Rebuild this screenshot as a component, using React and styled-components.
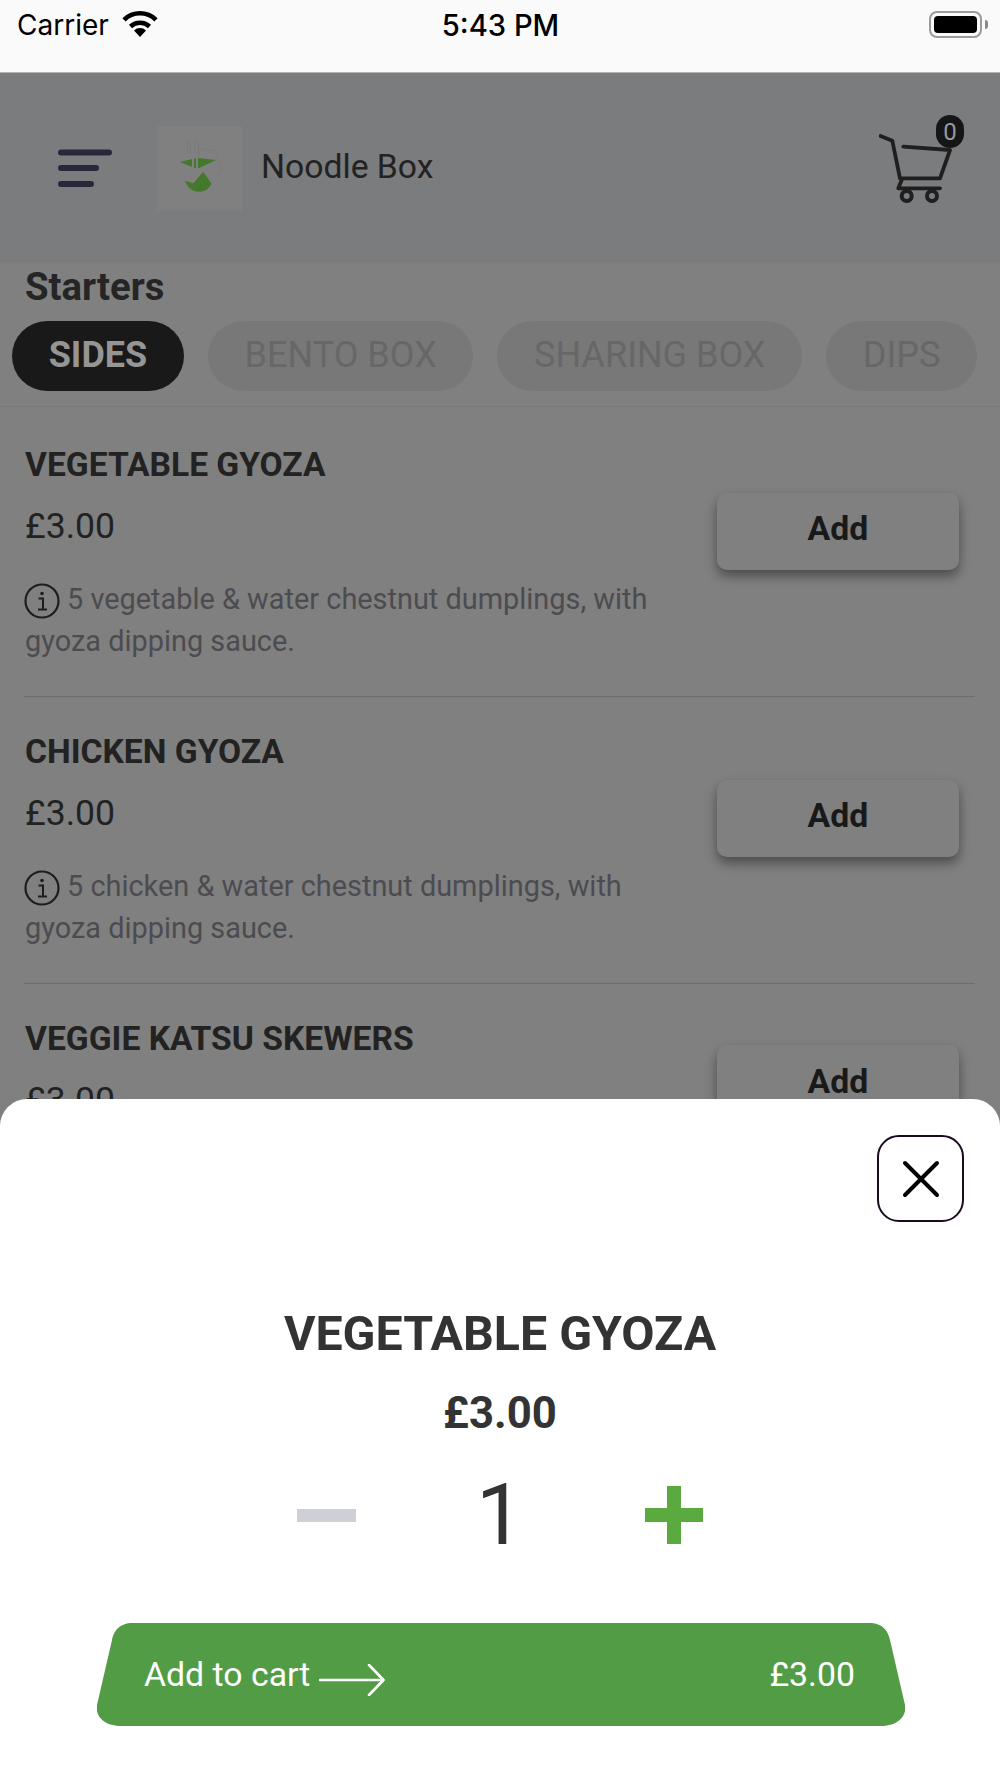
import React from "react";
import styled, { createGlobalStyle } from "styled-components";

const Global = createGlobalStyle`
  html, body { margin: 0; padding: 0; background: #808080; }
  * { box-sizing: border-box; }
`;

const Phone = styled.div`
  position: relative;
  width: 1000px;
  height: 1778px;
  overflow: hidden;
  background: #808080;
  font-family: Roboto, "Liberation Sans", sans-serif;
`;

const StatusBar = styled.div`
  display: grid;
  grid-template-columns: 1fr auto 1fr;
  align-items: start;
  height: 73px;
  padding: 8px 12px 0 17px;
  background: #fafafa;
  border-bottom: 1px solid #b4b4b4;
  color: #000;
  font-family: Inter, "Liberation Sans", sans-serif;
  font-size: 28px;
  line-height: 34px;
`;
const Carrier = styled.div`
  display: flex;
  align-items: center;
  gap: 12px;
`;
const Clock = styled.div`
  margin-right: 4px;
  padding-top: 1px;
  font-size: 29.2px;
  font-weight: 500;
`;
const Battery = styled.div`
  justify-self: end;
  margin-top: 3px;
  display: flex;
  align-items: center;
  gap: 3px;
`;
const BatteryShell = styled.div`
  width: 53px;
  height: 27px;
  padding: 3px;
  border: 2px solid #9b9b9b;
  border-radius: 8px;
`;
const BatteryFill = styled.div`
  width: 100%;
  height: 100%;
  background: #000;
  border-radius: 4px;
`;
const BatteryNub = styled.div`
  width: 3px;
  height: 9px;
  background: #8a8a8a;
  border-radius: 0 3px 3px 0;
`;

const Header = styled.header`
  display: flex;
  align-items: center;
  height: 190px;
  padding: 0 36px 0 58px;
  background: #7b7c7e;
`;
const MenuIcon = styled.svg`
  display: block;
  width: 54px;
  height: 40px;
  margin-right: 45px;
`;
const LogoTile = styled.div`
  width: 85px;
  height: 85px;
  margin-right: 19px;
  background: #808080;
`;
const Brand = styled.div`
  flex: 1;
  margin-bottom: 4px;
  font-size: 33.7px;
  color: #222;
`;
const CartWrap = styled.div`
  position: relative;
  width: 85px;
  height: 90px;
  margin-top: -16px;
`;
const CartBadge = styled.span`
  position: absolute;
  top: 0;
  right: 0;
  display: flex;
  align-items: center;
  justify-content: center;
  width: 28px;
  height: 33px;
  border-radius: 14px;
  background: #161616;
  color: #9a9a9a;
  font-size: 24px;
`;

const SectionTitle = styled.h2`
  margin: 0;
  height: 58px;
  padding-left: 25px;
  font-size: 38.3px;
  line-height: 48px;
  font-weight: 700;
  color: #252525;
`;
const Tabs = styled.nav`
  display: flex;
  gap: 24px;
  margin-bottom: 3px;
  padding: 0 12px 15px;
  border-bottom: 1px solid #797979;
`;
const Tab = styled.div`
  height: 70px;
  padding: 0 36.7px;
  border-radius: 35px;
  background: ${(p) => (p.$active ? "#191919" : "#787878")};
  color: ${(p) => (p.$active ? "#959595" : "#676767")};
  font-size: 36px;
  line-height: 68px;
  font-weight: ${(p) => (p.$active ? 700 : 400)};
  white-space: nowrap;
`;

const Item = styled.article`
  display: flex;
  align-items: center;
  margin: 0 25px 0 24px;
  min-height: ${(p) => (p.$short ? "243px" : "auto")};
  border-bottom: ${(p) => (p.$short ? "none" : "1px solid #6c6c6c")};
`;
const ItemBody = styled.div`
  align-self: flex-start;
  width: 640px;
  margin-right: 53px;
  padding: 34.5px 0 34.5px 1px;
`;
const ItemName = styled.div`
  font-size: 33.6px;
  line-height: 40px;
  font-weight: 700;
  color: #222;
`;
const ItemPrice = styled.div`
  margin-top: 19px;
  font-size: 35.6px;
  line-height: 44px;
  color: #222;
`;
const ItemDesc = styled.p`
  margin: 30px 0 0;
  font-size: 28.9px;
  line-height: 42px;
  color: #4c4c50;
`;
const InfoIcon = styled.svg`
  width: 36px;
  height: 36px;
  margin: 0 7px 0 -1px;
  vertical-align: -10px;
`;
const AddButton = styled.button`
  display: block;
  flex: none;
  width: 242px;
  height: 77px;
  margin: 0 0 43.5px;
  padding: 0 0 5px;
  border: none;
  border-radius: 10px;
  background: #808080;
  box-shadow: 0 6px 12px rgba(0, 0, 0, 0.42);
  font: 700 33.8px Roboto, sans-serif;
  color: #191919;
`;

const Sheet = styled.section`
  position: absolute;
  left: 0;
  right: 0;
  bottom: 0;
  height: 679px;
  display: flex;
  flex-direction: column;
  align-items: center;
  background: #fff;
  border-radius: 27px 27px 0 0;
`;
const CloseButton = styled.button`
  align-self: flex-end;
  display: flex;
  align-items: center;
  justify-content: center;
  width: 87px;
  height: 87px;
  margin: 36px 36px 0 0;
  padding: 0;
  background: #fff;
  border: 2px solid #1a0a20;
  border-radius: 22px;
`;
const SheetTitle = styled.h1`
  margin: 82px 0 0;
  font-size: 48.3px;
  line-height: 60px;
  font-weight: 700;
  color: #333;
`;
const SheetPrice = styled.div`
  margin-top: 24px;
  font-size: 43.7px;
  line-height: 50px;
  font-weight: 700;
  color: #333;
`;
const Stepper = styled.div`
  display: grid;
  grid-template-columns: repeat(3, 174px);
  align-items: center;
  justify-items: center;
  height: 100px;
  margin-top: 27px;
`;
const Minus = styled.div`
  width: 59px;
  height: 13px;
  background: #cfd0d6;
`;
const Plus = styled.svg`
  display: block;
  width: 58px;
  height: 58px;
`;
const Qty = styled.div`
  font-size: 85px;
  line-height: 100px;
  font-weight: 400;
  color: #333;
`;
const CartButton = styled.button`
  display: flex;
  align-items: center;
  justify-content: space-between;
  width: 808px;
  height: 103px;
  margin: 58px 0 0 2px;
  padding: 0 50px 0 47px;
  border: none;
  background: #529c45;
  color: #fff;
  font: 400 33.8px Roboto, sans-serif;
  clip-path: path("M36 0H772C786 0 791 8 793 17L808 82C810 92 802 103 784 103H24C6 103 -2 92 0 82L15 17C17 8 22 0 36 0Z");
`;
const CartLabel = styled.span`
  display: flex;
  align-items: center;
  gap: 9px;
`;
const Arrow = styled.svg`
  display: block;
  width: 66px;
  height: 32px;
  margin-top: 10px;
`;

const items = [
  {
    name: "VEGETABLE GYOZA",
    desc: "5 vegetable & water chestnut dumplings, with gyoza dipping sauce.",
  },
  {
    name: "CHICKEN GYOZA",
    desc: "5 chicken & water chestnut dumplings, with gyoza dipping sauce.",
  },
  { name: "VEGGIE KATSU SKEWERS", short: true },
];

const Info = () => (
  <InfoIcon viewBox="0 0 36 36" aria-hidden="true">
    <circle cx="18" cy="18" r="16.5" fill="none" stroke="#1d1d1d" strokeWidth="2.2" />
    <circle cx="18" cy="10.5" r="1.8" fill="#1d1d1d" />
    <path d="M14.5 15.5H19V26M14 26.5H23" fill="none" stroke="#1d1d1d" strokeWidth="2" />
  </InfoIcon>
);

export default function App() {
  return (
    <Phone>
      <Global />
      <StatusBar>
        <Carrier>
          Carrier
          <svg width="38" height="28" viewBox="0 0 38 28" aria-hidden="true">
            <path d="M19 26l-6-6.500a8.500 8.500 0 0 1 12 0z" fill="#000" />
            <path d="M9.500 15.500a14 14 0 0 1 19 0" fill="none" stroke="#000" strokeWidth="4.600" />
            <path d="M3 8.800a23 23 0 0 1 32 0" fill="none" stroke="#000" strokeWidth="4.600" />
          </svg>
        </Carrier>
        <Clock>5:43 PM</Clock>
        <Battery>
          <BatteryShell>
            <BatteryFill />
          </BatteryShell>
          <BatteryNub />
        </Battery>
      </StatusBar>

      <Header>
        <MenuIcon viewBox="0 0 54 40" aria-hidden="true">
          <path
            d="M3 4.500H51M3 20H38M3 36H33"
            fill="none"
            stroke="#28283a"
            strokeWidth="6"
            strokeLinecap="round"
          />
        </MenuIcon>
        <LogoTile>
          <svg width="85" height="85" viewBox="0 0 85 85" aria-hidden="true">
            <path
              d="M31 27L30 16H33L34 28M38 28L38 15H41L42 31M42 27L46 23L60 25L61 34L65 46L58 52"
              fill="none"
              stroke="#767676"
              strokeWidth="0.6"
            />
            <path d="M23 36L35 33V41Z" fill="#44782d" />
            <path d="M37 32.500H39V42H37Z" fill="#44782d" />
            <path d="M41 32L59 34L41 42.500Z" fill="#44782d" />
            <path d="M46.300 45.700L54.700 58C51 64 46 66.500 40 65.700C34 65 30 60 28 54.700L36.300 57.300Z" fill="#44782d" />
          </svg>
        </LogoTile>
        <Brand>Noodle Box</Brand>
        <CartWrap>
          <svg width="85" height="90" viewBox="0 0 85 90" aria-hidden="true">
            <path
              d="M1.500 21L13.300 25.700L21 63.300H61L71 35L24.300 31.700M22.700 65L19.300 73.300H61"
              fill="none"
              stroke="#1f1f1f"
              strokeWidth="3.800"
              strokeLinecap="round"
              strokeLinejoin="round"
            />
            <circle cx="27.700" cy="81" r="5" fill="none" stroke="#1f1f1f" strokeWidth="4" />
            <circle cx="53" cy="81" r="5" fill="none" stroke="#1f1f1f" strokeWidth="4" />
          </svg>
          <CartBadge>0</CartBadge>
        </CartWrap>
      </Header>

      <SectionTitle>Starters</SectionTitle>
      <Tabs>
        <Tab $active>SIDES</Tab>
        <Tab>BENTO BOX</Tab>
        <Tab>SHARING BOX</Tab>
        <Tab>DIPS</Tab>
      </Tabs>

      {items.map((item) => (
        <Item key={item.name} $short={item.short}>
          <ItemBody>
            <ItemName>{item.name}</ItemName>
            <ItemPrice>£3.00</ItemPrice>
            {item.desc && (
              <ItemDesc>
                <Info />
                {item.desc}
              </ItemDesc>
            )}
          </ItemBody>
          <AddButton>Add</AddButton>
        </Item>
      ))}

      <Sheet>
        <CloseButton aria-label="Close">
          <svg width="38" height="38" viewBox="0 0 38 38" aria-hidden="true">
            <path d="M3 3L35 35M35 3L3 35" stroke="#000" strokeWidth="4" strokeLinecap="round" />
          </svg>
        </CloseButton>
        <SheetTitle>VEGETABLE GYOZA</SheetTitle>
        <SheetPrice>£3.00</SheetPrice>
        <Stepper>
          <Minus />
          <Qty>1</Qty>
          <Plus viewBox="0 0 58 58" aria-hidden="true">
            <path d="M22 0H36V22H58V36H36V58H22V36H0V22H22Z" fill="#5aaa3f" />
          </Plus>
        </Stepper>
        <CartButton>
          <CartLabel>
            Add to cart
            <Arrow viewBox="0 0 66 32" aria-hidden="true">
              <path
                d="M1 16H64M50 1L64.500 16L50 31"
                fill="none"
                stroke="#fff"
                strokeWidth="2.600"
                strokeLinecap="round"
                strokeLinejoin="round"
              />
            </Arrow>
          </CartLabel>
          <span>£3.00</span>
        </CartButton>
      </Sheet>
    </Phone>
  );
}
